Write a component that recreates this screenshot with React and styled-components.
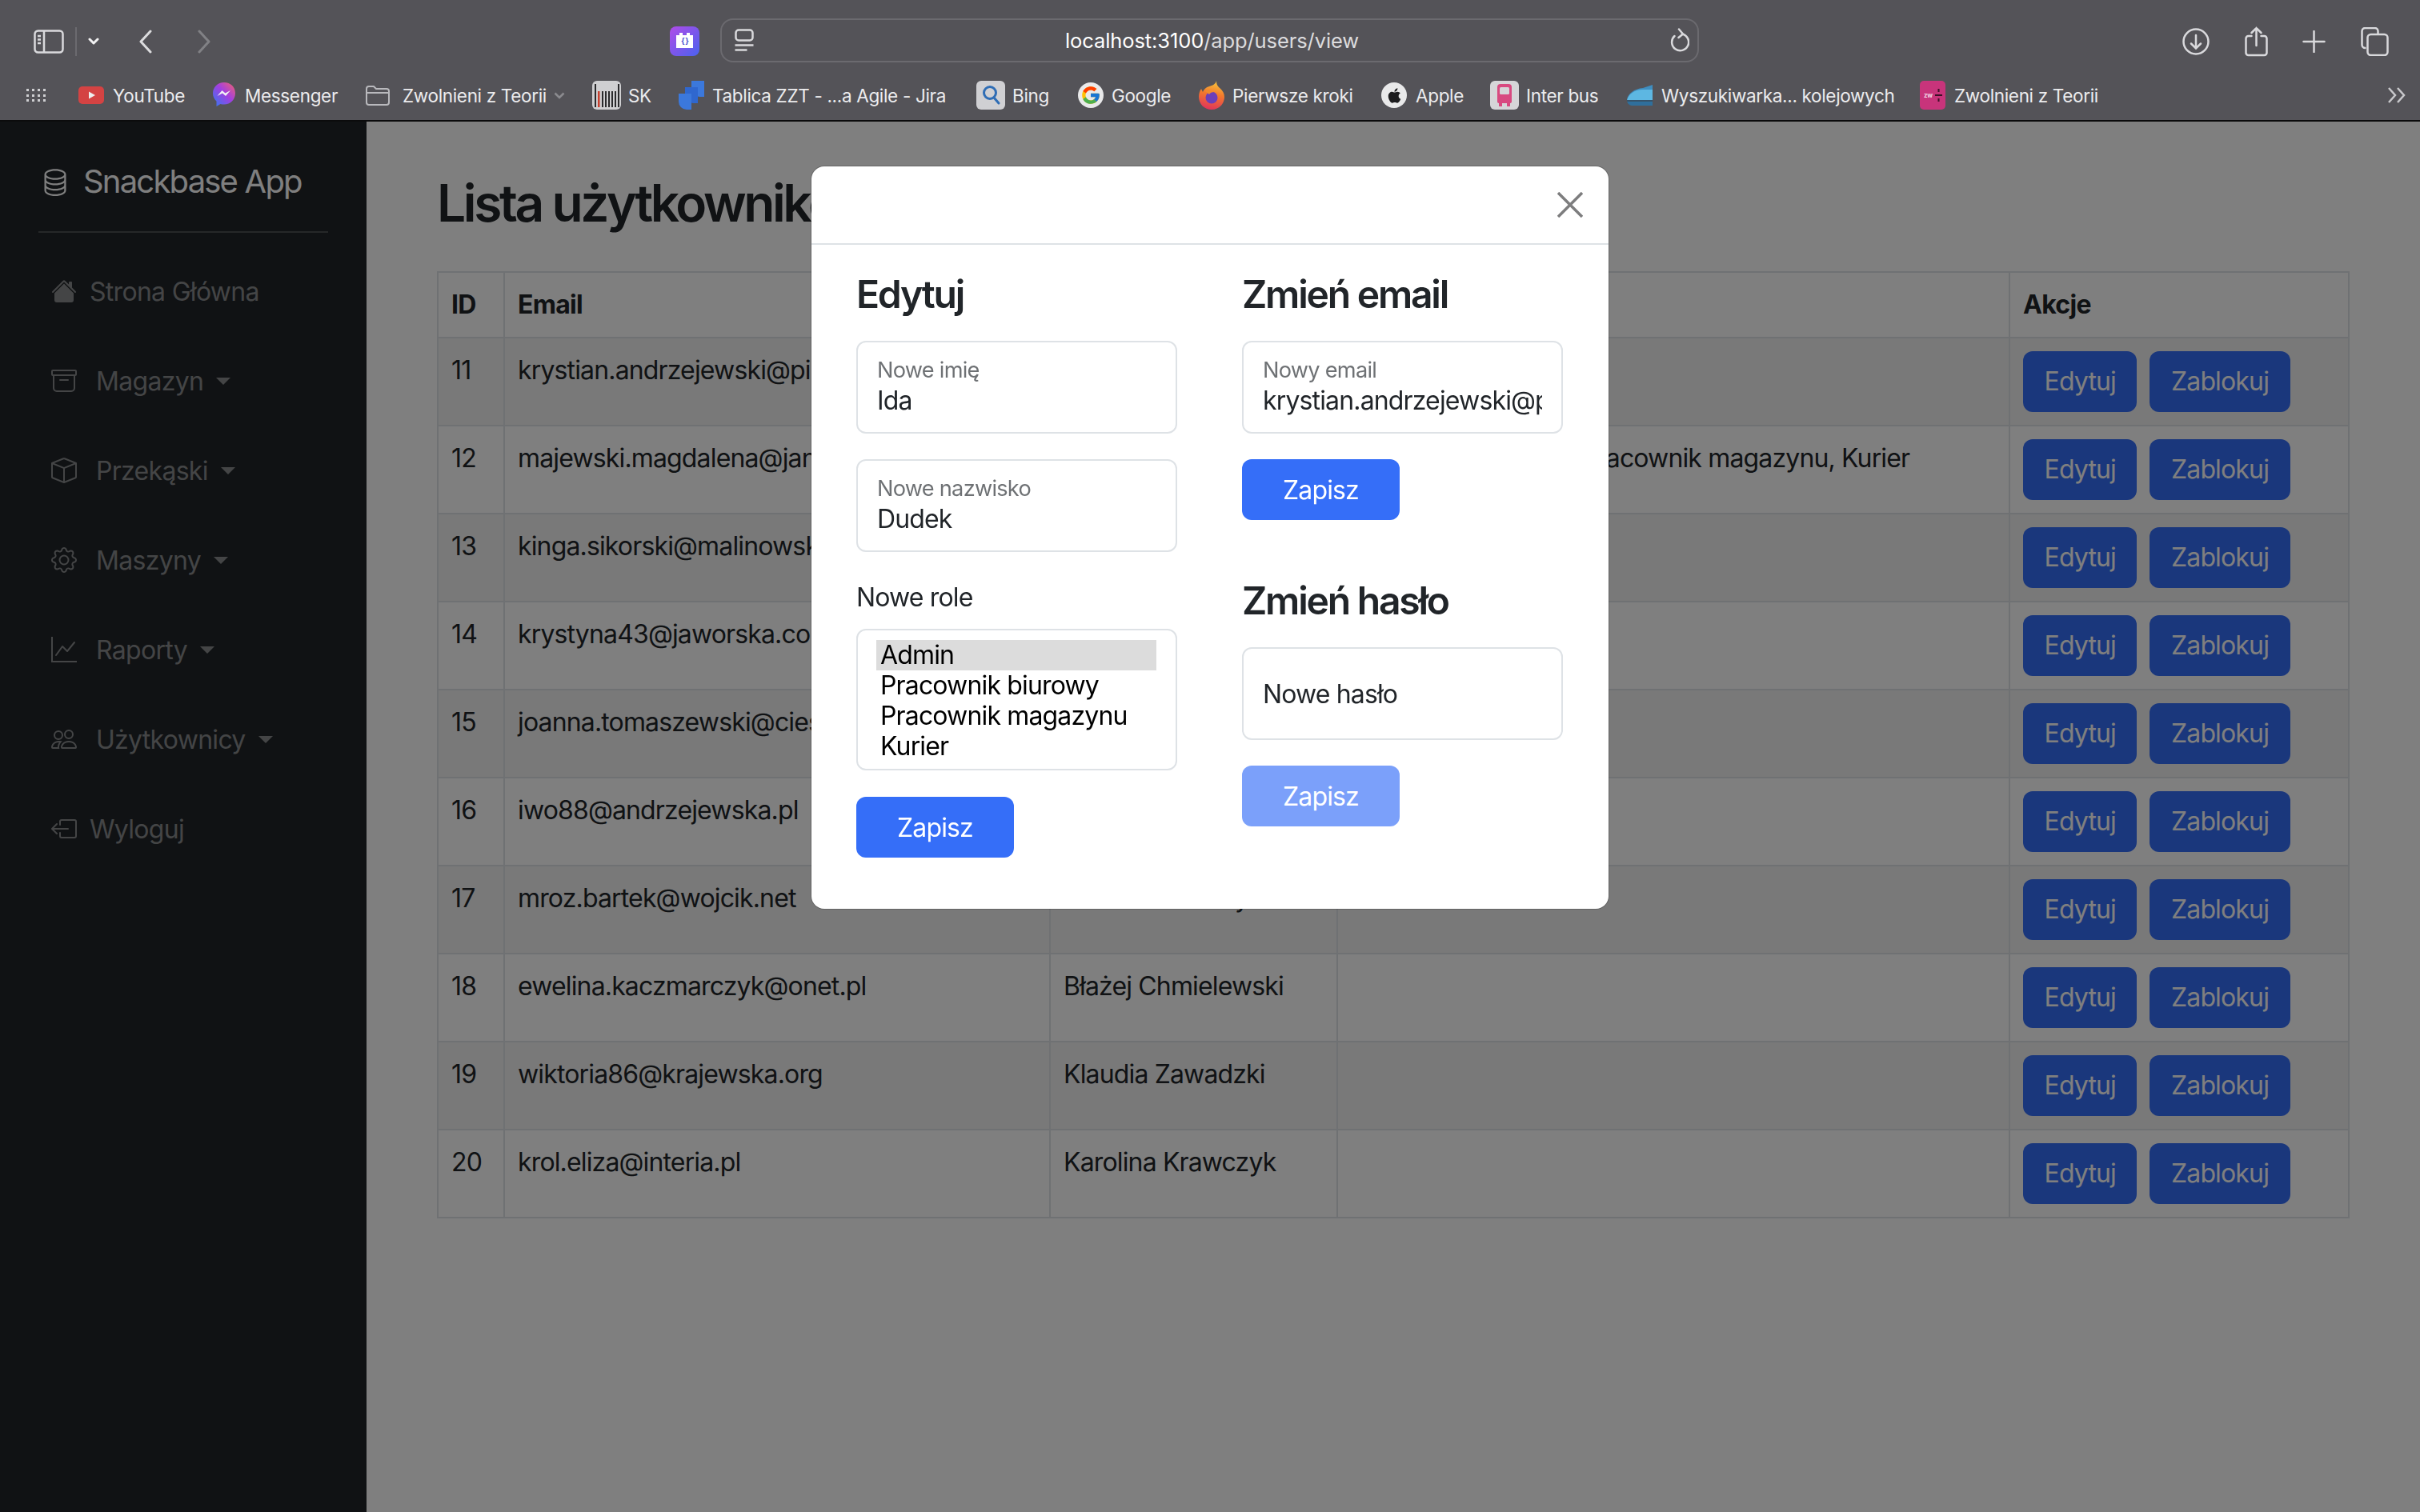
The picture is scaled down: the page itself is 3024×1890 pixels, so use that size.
import React from "react";
import styled, { createGlobalStyle } from "styled-components";
import {
  BsDatabase,
  BsHouseFill,
  BsArchive,
  BsBox,
  BsGear,
  BsGraphUp,
  BsPeople,
  BsBoxArrowLeft,
} from "react-icons/bs";
import { FaApple } from "react-icons/fa";
import { FcGoogle } from "react-icons/fc";

const GlobalStyle = createGlobalStyle`
  html, body {
    margin: 0;
    height: 100%;
    overflow: hidden;
    background: #fff;
    font-family: Inter, "Noto Sans", sans-serif;
    letter-spacing: -0.85px;
    color: #212529;
  }
  * { box-sizing: border-box; }
`;

const Shell = styled.div`
  display: flex;
  flex-direction: column;
  height: 1890px;
`;

/* ---------- browser chrome ---------- */

const Chrome = styled.header`
  height: 152px;
  flex: none;
  background: #545358;
  border-bottom: 2px solid #0b0b0c;
  display: flex;
  flex-direction: column;
`;

const Toolbar = styled.div`
  height: 100px;
  display: flex;
  align-items: center;
  padding: 3px 0 0 42px;
`;

const NavGroup = styled.div`
  width: 795px;
  display: flex;
  align-items: center;
`;

const ToolDivider = styled.span`
  width: 2px;
  height: 36px;
  margin: 0 14px;
  background: #6b6a6f;
`;

const HistoryIcons = styled.div`
  display: flex;
  align-items: center;
  gap: 57px;
  margin-left: 49px;
`;

const ExtensionIcon = styled.svg`
  width: 37px;
  height: 37px;
  margin-right: 26px;
  flex: none;
`;

const UrlBar = styled.div`
  width: 1223px;
  height: 55px;
  margin-top: -3px;
  border: 2px solid #6b6a6f;
  border-radius: 16px;
  display: flex;
  align-items: center;
  justify-content: space-between;
  padding: 0 10px 0 16px;
`;

const UrlText = styled.div`
  font-size: 25.5px;
  color: #dcdcde;
  letter-spacing: -0.1px;
  span {
    color: #fff;
  }
`;

const WindowIcons = styled.div`
  display: flex;
  align-items: center;
  gap: 43.500px;
  margin-left: 604px;
`;

const BookmarkBar = styled.nav`
  height: 50px;
  display: flex;
  align-items: center;
  padding-left: 33px;
  margin-top: -6px;
`;

const AppsGrid = styled.div`
  width: 24px;
  height: 16px;
  margin-right: 41px;
  flex: none;
  display: grid;
  grid-template-columns: repeat(4, 3px);
  grid-auto-rows: 3px;
  justify-content: space-between;
  align-content: space-between;
  i {
    background: #cfcfd2;
  }
`;

const Bookmark = styled.a`
  width: ${(p) => p.$w}px;
  flex: none;
  display: flex;
  align-items: center;
  font-size: 22.5px;
  letter-spacing: -0.33px;
  color: #ececee;
  white-space: nowrap;
`;

const BookmarkIcon = styled.span`
  width: ${(p) => p.$slot}px;
  height: 40px;
  flex: none;
  display: flex;
  align-items: center;
`;

const Favicon = styled.svg`
  display: block;
`;

const OverflowMark = styled.svg`
  margin-left: auto;
  margin-right: 17px;
`;

const Stroke = { fill: "none", stroke: "#d9d9dc", strokeWidth: 2.5 };

const SidebarToggle = () => (
  <svg width="38" height="30" viewBox="0 0 38 30" {...Stroke}>
    <rect x="1.5" y="1.5" width="35" height="27" rx="4" />
    <path d="M13 2v26M5 8h4M5 12.500h4M5 17h4" />
  </svg>
);

const Chevron = ({ d, w, h, color, sw = 3 }) => (
  <svg width={w} height={h} viewBox={`0 0 ${w} ${h}`} fill="none" stroke={color} strokeWidth={sw} strokeLinecap="round" strokeLinejoin="round">
    <path d={d} />
  </svg>
);

const PageMenuIcon = () => (
  <svg width="24" height="28" viewBox="0 0 24 28" {...Stroke}>
    <rect x="1.500" y="1.500" width="21" height="13" rx="3.500" />
    <path d="M0.500 20.500h23M0.500 26.500h15" />
  </svg>
);

const ReloadIcon = () => (
  <svg width="24" height="30" viewBox="0 0 24 30" {...Stroke} strokeLinecap="round">
    <path d="M15 7.500A10.500 10.500 0 1 1 5.500 10" />
    <path d="M11 1.500l5 6-5.500 4.500" />
  </svg>
);

const DownloadIcon = () => (
  <svg width="34" height="34" viewBox="0 0 34 34" {...Stroke} strokeLinecap="round">
    <circle cx="17" cy="17" r="15.500" />
    <path d="M17 9v16M11 19.500l6 6 6-6" />
  </svg>
);

const ShareIcon = () => (
  <svg width="29" height="38" viewBox="0 0 28 38" {...Stroke} strokeLinecap="round">
    <path d="M8 12H4a3 3 0 0 0-3 3v18a3 3 0 0 0 3 3h20a3 3 0 0 0 3-3V15a3 3 0 0 0-3-3h-4" />
    <path d="M14 24V2M8 8l6-6 6 6" />
  </svg>
);

const PlusIcon = () => (
  <svg width="29" height="28" viewBox="0 0 28 28" {...Stroke} strokeLinecap="round">
    <path d="M14 1v26M1 14h26" />
  </svg>
);

const TabsIcon = () => (
  <svg width="35" height="36" viewBox="0 0 34 36" {...Stroke}>
    <path d="M6 26H5a4 4 0 0 1-4-4V5a4 4 0 0 1 4-4h12a4 4 0 0 1 4 4v3" />
    <rect x="8" y="9" width="25" height="26" rx="4" />
  </svg>
);

const YouTubeIcon = () => (
  <Favicon width="32" height="22" viewBox="0 0 32 22">
    <rect width="32" height="22" rx="5" fill="#d44343" />
    <path d="M13 6.500l8 4.500-8 4.500z" fill="#eee" />
  </Favicon>
);

const MessengerIcon = () => (
  <Favicon width="28" height="32" viewBox="0 0 28 32">
    <defs>
      <linearGradient id="msgr" x1="0" y1="1" x2="1" y2="0">
        <stop offset="0" stopColor="#2f7bf0" />
        <stop offset="0.55" stopColor="#a23fe0" />
        <stop offset="1" stopColor="#f2636a" />
      </linearGradient>
    </defs>
    <path d="M14 0C6 0 0 6 0 13.500c0 4 1.700 7.500 4.500 10V30l5-3c1.400.4 3 .6 4.500.6 8 0 14-6 14-14S22 0 14 0z" fill="url(#msgr)" />
    <path d="M5.500 17l6-7 4 3.500 6.500-3.500-6 7-4-3.500z" fill="#f3f3f5" />
  </Favicon>
);

const FolderIcon = () => (
  <Favicon width="30" height="26" viewBox="0 0 30 26" fill="none" stroke="#b9b9bd" strokeWidth="2">
    <path d="M1 5a3 3 0 0 1 3-3h6l3 3h13a3 3 0 0 1 3 3v14a3 3 0 0 1-3 3H4a3 3 0 0 1-3-3z" />
    <path d="M1 10h28" />
  </Favicon>
);

const SmallCaret = styled.svg`
  margin-left: 9px;
`;

const BarcodeIcon = () => (
  <Favicon width="36" height="36" viewBox="0 0 36 36">
    <rect width="36" height="36" rx="6" fill="#cfcfd1" />
    <rect x="7" y="13" width="2.500" height="20" fill="#c8402f" />
    {[3, 12, 16, 20, 24, 28, 32].map((x) => (
      <rect key={x} x={x} y={x === 3 || x === 32 ? 4 : 13} width="2" height={x === 3 || x === 32 ? 29 : 20} fill="#2a2a2c" />
    ))}
  </Favicon>
);

const JiraIcon = () => (
  <Favicon width="32" height="36" viewBox="0 0 32 36">
    <path d="M16 0h16v20h-6a10 10 0 0 1-10-10z" fill="#3b78dc" />
    <path d="M8 8h16v20h-6A10 10 0 0 1 8 18z" fill="#2f67cf" />
    <path d="M0 16h16v20h-6A10 10 0 0 1 0 26z" fill="#3b78dc" />
  </Favicon>
);

const BingIcon = () => (
  <Favicon width="36" height="36" viewBox="0 0 36 36">
    <rect width="36" height="36" rx="6" fill="#d0d0d3" />
    <circle cx="17" cy="15" r="7.500" fill="none" stroke="#2f6db5" strokeWidth="3" />
    <path d="M22 21l6 7" stroke="#2f6db5" strokeWidth="3" strokeLinecap="round" />
  </Favicon>
);

const GoogleTile = styled.span`
  width: 32px;
  height: 32px;
  border-radius: 50%;
  background: #e9e9ea;
  display: flex;
  align-items: center;
  justify-content: center;
`;

const FirefoxIcon = () => (
  <Favicon width="32" height="36" viewBox="0 0 32 36">
    <defs>
      <linearGradient id="ffx" x1="0.6" y1="0" x2="0.4" y2="1">
        <stop offset="0" stopColor="#f6c53c" />
        <stop offset="0.45" stopColor="#f2792c" />
        <stop offset="1" stopColor="#e0335b" />
      </linearGradient>
    </defs>
    <path d="M22 0c0 4 1 6 4 9 4 3 6 7 6 11 0 9-7 16-16 16S0 29 0 20c0-4 1-7 3-10l2 4c1-3 4-6 8-7 4-1 8-3 9-7z" fill="url(#ffx)" />
    <circle cx="16" cy="21" r="7.500" fill="#6b3fb8" />
    <path d="M8 13c4-2 9-1 12 1-4 0-6 1-7 3z" fill="#f08a2e" />
  </Favicon>
);

const AppleTile = styled(GoogleTile)`
  color: #1c1c1e;
`;

const BusIcon = () => (
  <Favicon width="36" height="36" viewBox="0 0 36 36">
    <rect width="36" height="36" rx="6" fill="#d6d6d8" />
    <path d="M9 8a4 4 0 0 1 4-4h10a4 4 0 0 1 4 4v18a2 2 0 0 1-2 2H11a2 2 0 0 1-2-2z" fill="#d84a80" />
    <rect x="12" y="8" width="12" height="9" rx="1.500" fill="#d6d6d8" />
    <rect x="11" y="27" width="4" height="5" fill="#d84a80" />
    <rect x="21" y="27" width="4" height="5" fill="#d84a80" />
  </Favicon>
);

const TrainIcon = () => (
  <Favicon width="32" height="26" viewBox="0 0 32 26">
    <path d="M32 0v8H14C8 9 3 13 0 19c1-8 9-14 20-15z" fill="#3f8ec0" />
    <path d="M32 6v13H0C2 12 9 6 20 6z" fill="#5db7e2" />
    <path d="M0 19h32v7H6c-3 0-6-3-6-7z" fill="#2f6f9c" />
    <path d="M0 19h32v2H0z" fill="#35536b" />
  </Favicon>
);

const ZwTile = () => (
  <Favicon width="32" height="36" viewBox="0 0 32 36">
    <rect width="32" height="36" rx="5" fill="#c8347b" />
    <text x="5" y="21" fontSize="8" fontWeight="700" fill="#f1d6e3" fontFamily="Inter, sans-serif">zw</text>
    <path d="M19 18h9" stroke="#3b1026" strokeWidth="2" />
    <path d="M23.500 10v4M23.500 22v4" stroke="#3b1026" strokeWidth="2" />
  </Favicon>
);

const bookmarks = [
  { label: "YouTube", w: 168, slot: 43, icon: <YouTubeIcon /> },
  { label: "Messenger", w: 191, slot: 40, icon: <MessengerIcon /> },
  {
    label: "Zwolnieni z Teorii",
    w: 283,
    slot: 46,
    icon: <FolderIcon />,
    caret: true,
  },
  { label: "SK", w: 108, slot: 45, icon: <BarcodeIcon /> },
  { label: "Tablica ZZT - ...a Agile - Jira", w: 372, slot: 42, icon: <JiraIcon /> },
  { label: "Bing", w: 127, slot: 45, icon: <BingIcon /> },
  {
    label: "Google",
    w: 151,
    slot: 42,
    icon: (
      <GoogleTile>
        <FcGoogle size={26} />
      </GoogleTile>
    ),
  },
  { label: "Pierwsze kroki", w: 228, slot: 42, icon: <FirefoxIcon /> },
  {
    label: "Apple",
    w: 136,
    slot: 43,
    icon: (
      <AppleTile>
        <FaApple size={21} />
      </AppleTile>
    ),
  },
  { label: "Inter bus", w: 171, slot: 45, icon: <BusIcon /> },
  { label: "Wyszukiwarka... kolejowych", w: 366, slot: 43, icon: <TrainIcon /> },
  { label: "Zwolnieni z Teorii", w: 230, slot: 43, icon: <ZwTile /> },
];

/* ---------- app ---------- */

const Workspace = styled.div`
  flex: 1;
  display: flex;
  min-height: 0;
`;

const Sidebar = styled.aside`
  width: 458px;
  flex: none;
  background: #212529;
  padding: 45px 48px 0;
  display: flex;
  flex-direction: column;
`;

const Brand = styled.div`
  display: flex;
  align-items: center;
  gap: 17px;
  padding: 0 0 32px 3px;
  border-bottom: 2px solid rgba(255, 255, 255, 0.2);
  font-size: 40px;
  line-height: 60px;
  letter-spacing: -1.8px;
  color: #fff;
`;

const NavList = styled.ul`
  list-style: none;
  margin: 33px 0 0;
  padding: 0;
  display: flex;
  flex-direction: column;
  gap: 32px;
`;

const NavItem = styled.li`
  height: 80px;
  padding-left: 16px;
  display: flex;
  align-items: center;
  gap: ${(p) => p.$gap}px;
  font-size: 32px;
  letter-spacing: -0.7px;
  color: rgba(255, 255, 255, 0.47);
  &::after {
    ${(p) =>
      p.$caret
        ? `content: "";
           margin-left: -8px;
           border-top: 9.6px solid currentColor;
           border-left: 9.6px solid transparent;
           border-right: 9.6px solid transparent;`
        : ""}
  }
`;

const NavIconSlot = styled.span`
  width: 32px;
  height: 32px;
  display: flex;
  align-items: center;
  justify-content: center;
`;

const Main = styled.main`
  flex: 1;
  min-width: 0;
  padding: 63px 88px 0;
`;

const Title = styled.h2`
  margin: 0 0 47px;
  font-size: 64px;
  line-height: 77px;
  font-weight: 600;
  letter-spacing: -3.4px;
  color: #212529;
`;

const Table = styled.table`
  width: 100%;
  table-layout: fixed;
  border-collapse: collapse;
  font-size: 32px;
  line-height: 48px;
  th,
  td {
    border: 2px solid #dee2e6;
    padding: 16px;
    text-align: left;
    vertical-align: top;
    white-space: nowrap;
    overflow: hidden;
  }
  th {
    font-weight: 700;
    letter-spacing: -0.7px;
  }
  tbody tr:nth-child(odd) td {
    background: rgba(0, 0, 0, 0.05);
  }
`;

const RowActions = styled.div`
  display: flex;
  gap: 16px;
`;

const Button = styled.button`
  height: 76px;
  padding: 0 ${(p) => p.$pad || 26.5}px;
  border: none;
  border-radius: 12px;
  background: #356ef8;
  color: #fff;
  font: inherit;
  font-size: 32px;
  letter-spacing: inherit;
  opacity: ${(p) => (p.disabled ? 0.65 : 1)};
`;

/* ---------- modal ---------- */

const Backdrop = styled.div`
  position: fixed;
  inset: 152px 0 0 0;
  background: rgba(0, 0, 0, 0.5);
  padding-top: 56px;
`;

const Modal = styled.section`
  width: 996px;
  height: 928px;
  margin: 0 auto;
  background: #fff;
  border-radius: 16px;
  box-shadow: 0 0 0 1px rgba(0, 0, 0, 0.18);
`;

const ModalHeader = styled.div`
  height: 98px;
  padding-right: 32px;
  border-bottom: 2px solid #dee2e6;
  display: flex;
  align-items: center;
  justify-content: flex-end;
`;

const ModalBody = styled.div`
  display: grid;
  grid-template-columns: 401px 401px;
  column-gap: 81px;
  padding: 33px 0 0 56px;
`;

const Column = styled.div`
  display: flex;
  flex-direction: column;
  align-items: flex-start;
`;

const Heading = styled.h4`
  margin: ${(p) => p.$top || 0}px 0 29px;
  font-size: 48px;
  line-height: 58px;
  font-weight: 600;
  letter-spacing: -2.2px;
  color: #212529;
`;

const Field = styled.div`
  position: relative;
  width: 401px;
  margin-bottom: 32px;
`;

const Input = styled.input`
  width: 100%;
  height: 116px;
  padding: ${(p) => (p.$floating ? "52px 24px 20px" : "0 24px")};
  border: 2px solid #dee2e6;
  border-radius: 12px;
  background: #fff;
  color: #212529;
  font: inherit;
  font-size: 32px;
  letter-spacing: inherit;
  outline: none;
  &::placeholder {
    color: #212529;
    opacity: 1;
  }
`;

const FloatLabel = styled.label`
  position: absolute;
  left: 26px;
  top: 17px;
  font-size: 27.2px;
  line-height: 40px;
  letter-spacing: -0.75px;
  color: rgba(33, 37, 41, 0.65);
`;

const FieldLabel = styled.div`
  margin: 1px 0 15px;
  font-size: 32px;
  line-height: 48px;
  color: #212529;
`;

const ListBox = styled.div`
  width: 401px;
  height: 177px;
  margin-bottom: 33px;
  padding: 12px 24px 0 23px;
  border: 2px solid #dee2e6;
  border-radius: 12px;
`;

const ListOption = styled.div`
  height: 38px;
  padding-left: 5px;
  font-size: 32px;
  line-height: 38px;
  color: #000;
  background: ${(p) => (p.$selected ? "#dcdcdc" : "transparent")};
`;

const rows = [
  [11, "krystian.andrzejewski@pinkowski.pl", "Ida Dudek", "Admin"],
  [12, "majewski.magdalena@jankowski.pl", "Magdalena Majewska", "Pracownik biurowy, Pracownik magazynu, Kurier"],
  [13, "kinga.sikorski@malinowski.pl", "Kinga Sikorska", "Kurier"],
  [14, "krystyna43@jaworska.com", "Krystyna Jaworska", "Kurier"],
  [15, "joanna.tomaszewski@ciesla.pl", "Joanna Tomaszewska", "Kurier"],
  [16, "iwo88@andrzejewska.pl", "Iwo Andrzejewski", "Kurier"],
  [17, "mroz.bartek@wojcik.net", "Franciszek Biały", "Kurier"],
  [18, "ewelina.kaczmarczyk@onet.pl", "Błażej Chmielewski", ""],
  [19, "wiktoria86@krajewska.org", "Klaudia Zawadzki", ""],
  [20, "krol.eliza@interia.pl", "Karolina Krawczyk", ""],
];

const navItems = [
  { label: "Strona Główna", gap: 16, icon: <BsHouseFill size={32} /> },
  { label: "Magazyn", gap: 24, caret: true, icon: <BsArchive size={32} /> },
  { label: "Przekąski", gap: 24, caret: true, icon: <BsBox size={32} /> },
  { label: "Maszyny", gap: 24, caret: true, icon: <BsGear size={32} /> },
  { label: "Raporty", gap: 24, caret: true, icon: <BsGraphUp size={32} /> },
  { label: "Użytkownicy", gap: 24, caret: true, icon: <BsPeople size={32} /> },
  { label: "Wyloguj", gap: 16, icon: <BsBoxArrowLeft size={32} /> },
];

export default function App() {
  return (
    <Shell>
      <GlobalStyle />
      <Chrome>
        <Toolbar>
          <NavGroup>
            <SidebarToggle />
            <ToolDivider />
            <Chevron w={14} h={10} d="M2 2l5 5 5-5" color="#f2f2f3" sw={3} />
            <HistoryIcons>
              <Chevron w={17} h={30} d="M15 2L3 15l12 13" color="#dcdcde" />
              <Chevron w={17} h={30} d="M2 2l12 13L2 28" color="#818185" />
            </HistoryIcons>
          </NavGroup>
          <ExtensionIcon viewBox="0 0 37 37">
            <defs>
              <linearGradient id="ext" x1="0" y1="0" x2="1" y2="1">
                <stop offset="0" stopColor="#b04be8" />
                <stop offset="1" stopColor="#4a62ee" />
              </linearGradient>
            </defs>
            <rect width="37" height="37" rx="8" fill="url(#ext)" />
            <path d="M8 11h4V8h4v3h5V8h4v3h4v16H8z" fill="#fff" rx="2" />
            <text x="18.500" y="22" textAnchor="middle" fontSize="10" fontWeight="700" fill="#4a4fd0" fontFamily="Inter, sans-serif">{"{ }"}</text>
          </ExtensionIcon>
          <UrlBar>
            <PageMenuIcon />
            <UrlText>
              <span>localhost:3100</span>/app/users/view
            </UrlText>
            <ReloadIcon />
          </UrlBar>
          <WindowIcons>
            <DownloadIcon />
            <ShareIcon />
            <PlusIcon />
            <TabsIcon />
          </WindowIcons>
        </Toolbar>
        <BookmarkBar>
          <AppsGrid>
            {Array.from({ length: 12 }).map((_, i) => (
              <i key={i} />
            ))}
          </AppsGrid>
          {bookmarks.map((b, i) => (
            <Bookmark key={i} $w={b.w}>
              <BookmarkIcon $slot={b.slot}>{b.icon}</BookmarkIcon>
              {b.label}
              {b.caret && (
                <SmallCaret width="14" height="9" viewBox="0 0 14 9" fill="none" stroke="#8b8b8f" strokeWidth="2.500">
                  <path d="M1.500 1.500L7 7l5.500-5.500" />
                </SmallCaret>
              )}
            </Bookmark>
          ))}
          <OverflowMark width="24" height="22" viewBox="0 0 24 22" fill="none" stroke="#c9c9cc" strokeWidth="2.500">
            <path d="M2 2l8 9-8 9M13 2l8 9-8 9" />
          </OverflowMark>
        </BookmarkBar>
      </Chrome>

      <Workspace>
        <Sidebar>
          <Brand>
            <BsDatabase size={36} />
            Snackbase App
          </Brand>
          <NavList>
            {navItems.map((item) => (
              <NavItem key={item.label} $gap={item.gap} $caret={item.caret}>
                <NavIconSlot>{item.icon}</NavIconSlot>
                {item.label}
              </NavItem>
            ))}
          </NavList>
        </Sidebar>
        <Main>
          <Title>Lista użytkowników</Title>
          <Table>
            <colgroup>
              <col width="83" />
              <col width="682" />
              <col width="359" />
              <col width="840" />
              <col width="424" />
            </colgroup>
            <thead>
              <tr>
                <th>ID</th>
                <th>Email</th>
                <th>Imię i nazwisko</th>
                <th>Role</th>
                <th>Akcje</th>
              </tr>
            </thead>
            <tbody>
              {rows.map(([id, email, name, roles]) => (
                <tr key={id}>
                  <td>{id}</td>
                  <td>{email}</td>
                  <td>{name}</td>
                  <td>{roles}</td>
                  <td>
                    <RowActions>
                      <Button>Edytuj</Button>
                      <Button>Zablokuj</Button>
                    </RowActions>
                  </td>
                </tr>
              ))}
            </tbody>
          </Table>
        </Main>
      </Workspace>

      <Backdrop>
        <Modal>
          <ModalHeader>
            <svg width="32" height="32" viewBox="0 0 32 32" fill="none" stroke="#7d7d7e" strokeWidth="3.500">
              <path d="M1 1l30 30M31 1L1 31" />
            </svg>
          </ModalHeader>
          <ModalBody>
            <Column>
              <Heading>Edytuj</Heading>
              <Field>
                <Input $floating readOnly value="Ida" />
                <FloatLabel>Nowe imię</FloatLabel>
              </Field>
              <Field>
                <Input $floating readOnly value="Dudek" />
                <FloatLabel>Nowe nazwisko</FloatLabel>
              </Field>
              <FieldLabel>Nowe role</FieldLabel>
              <ListBox>
                <ListOption $selected>Admin</ListOption>
                <ListOption>Pracownik biurowy</ListOption>
                <ListOption>Pracownik magazynu</ListOption>
                <ListOption>Kurier</ListOption>
              </ListBox>
              <Button $pad={51}>Zapisz</Button>
            </Column>
            <Column>
              <Heading>Zmień email</Heading>
              <Field>
                <Input $floating readOnly value="krystian.andrzejewski@pinkowski.pl" />
                <FloatLabel>Nowy email</FloatLabel>
              </Field>
              <Button $pad={51}>Zapisz</Button>
              <Heading $top={72}>Zmień hasło</Heading>
              <Field>
                <Input placeholder="Nowe hasło" readOnly />
              </Field>
              <Button $pad={51} disabled>
                Zapisz
              </Button>
            </Column>
          </ModalBody>
        </Modal>
      </Backdrop>
    </Shell>
  );
}
